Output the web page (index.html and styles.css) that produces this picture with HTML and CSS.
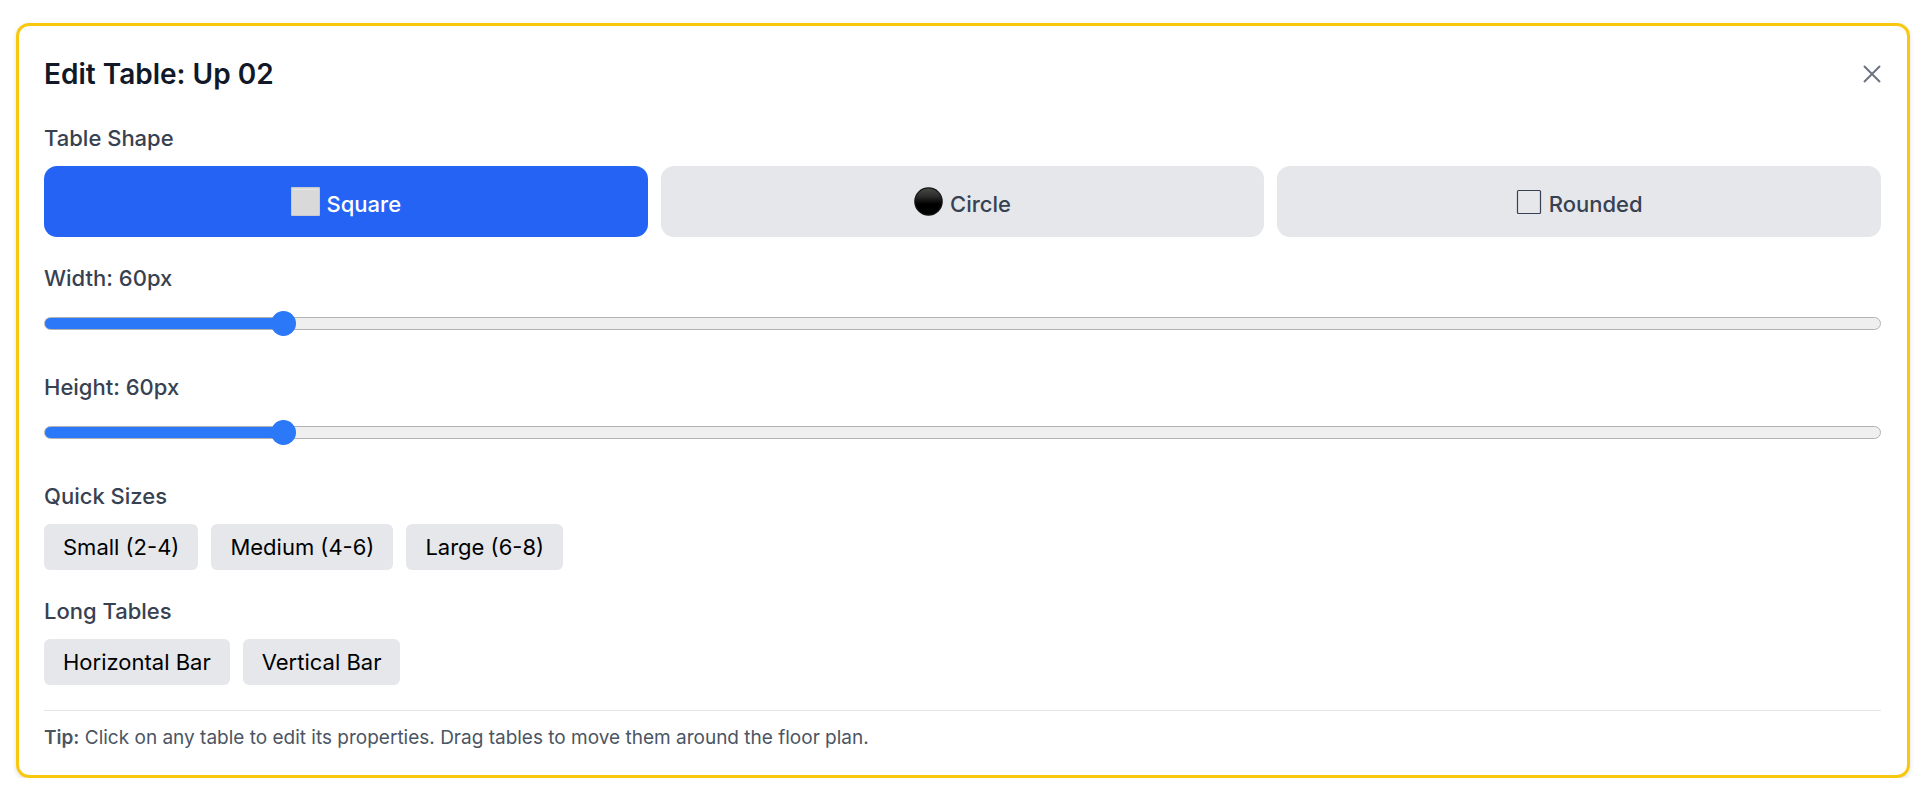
FILE: index.html
```
<!DOCTYPE html>
<html lang="en">
<head>
  <meta charset="UTF-8">
  <meta name="viewport" content="width=device-width, initial-scale=1.0">
  <title>Edit Table</title>
  <link rel="stylesheet" href="styles.css">
</head>
<body>
  <section class="editor">
    <header class="editor-header">
      <h3>Edit Table: Up 02</h3>
      <button class="close-btn" type="button" aria-label="Close">
        <svg width="18" height="18" viewBox="0 0 18 18" fill="none" stroke="currentColor" stroke-width="2"><path d="M1 1L17 17M17 1L1 17"/></svg>
      </button>
    </header>

    <div class="field">
      <span class="label" id="shapeLabel">Table Shape</span>
      <div class="shapes" role="group" aria-labelledby="shapeLabel">
        <button class="shape-btn active" type="button">
          <svg width="29" height="29" viewBox="0 0 29 29"><rect width="29" height="29" rx="1" fill="#c9cacf"/><rect x="1" y="1" width="27" height="27" fill="#d9d9d9"/><path d="M2 2.500H27" stroke="#e4e4e4"/></svg>
          <span>Square</span>
        </button>
        <button class="shape-btn" type="button">
          <svg width="29" height="29" viewBox="0 0 29 29">
            <defs><linearGradient id="shine" x1="0" y1="0" x2="0" y2="1"><stop offset="0" stop-color="#484845"/><stop offset=".3" stop-color="#2c2c2b"/><stop offset=".6" stop-color="#000"/></linearGradient></defs>
            <circle cx="14.500" cy="14.500" r="14.300" fill="#151515"/>
            <circle cx="14.500" cy="14.500" r="13" fill="url(#shine)"/>
          </svg>
          <span>Circle</span>
        </button>
        <button class="shape-btn" type="button">
          <svg width="26" height="29" viewBox="0 0 26 29" fill="none" stroke="currentColor"><rect x="1.500" y="3.500" width="23" height="23" rx="1" stroke-width="1.200"/></svg>
          <span>Rounded</span>
        </button>
      </div>
    </div>

    <div class="field">
      <label class="label" for="width">Width: <output id="widthValue">60</output>px</label>
      <input class="slider" id="width" type="range" min="40" max="200" value="60" style="--fill: 12.5%">
    </div>

    <div class="field">
      <label class="label" for="height">Height: <output id="heightValue">60</output>px</label>
      <input class="slider" id="height" type="range" min="40" max="200" value="60" style="--fill: 12.5%">
    </div>

    <div class="field">
      <span class="label" id="quickLabel">Quick Sizes</span>
      <div class="presets" role="group" aria-labelledby="quickLabel">
        <button type="button" onclick="setSize(60, 60)">Small (2-4)</button>
        <button type="button" onclick="setSize(80, 80)">Medium (4-6)</button>
        <button type="button" onclick="setSize(100, 100)">Large (6-8)</button>
      </div>
    </div>

    <div class="field">
      <span class="label" id="longLabel">Long Tables</span>
      <div class="presets" role="group" aria-labelledby="longLabel">
        <button type="button" onclick="setSize(160, 60)">Horizontal Bar</button>
        <button type="button" onclick="setSize(60, 160)">Vertical Bar</button>
      </div>
    </div>

    <p class="tip"><strong>Tip:</strong> Click on any table to edit its properties. Drag tables to move them around the floor plan.</p>
  </section>

  <script>
    const sliders = document.querySelectorAll('.slider');
    const shapeButtons = document.querySelectorAll('.shape-btn');

    function updateSlider(slider) {
      const fill = (slider.value - slider.min) / (slider.max - slider.min) * 100;
      slider.style.setProperty('--fill', `${fill}%`);
      document.getElementById(`${slider.id}Value`).textContent = slider.value;
    }

    function setSize(width, height) {
      document.getElementById('width').value = width;
      document.getElementById('height').value = height;
      sliders.forEach(updateSlider);
    }

    sliders.forEach((slider) => {
      slider.addEventListener('input', () => updateSlider(slider));
    });

    shapeButtons.forEach((button) => {
      button.addEventListener('click', () => {
        shapeButtons.forEach((b) => b.classList.remove('active'));
        button.classList.add('active');
      });
    });
  </script>
</body>
</html>
```
FILE: styles.css
```
* { margin: 0; padding: 0; box-sizing: border-box; }

body {
  font-family: Inter, "Liberation Sans", sans-serif;
  font-size: 22px;
  line-height: 32px;
  background: #fff;
  color: #000;
}

button {
  font: inherit;
  color: inherit;
  border: none;
  cursor: pointer;
}

.editor {
  margin: 23px 22px 0 16px;
  padding: 25px 26px 24px 25px;
  border: 3px solid #f8c811;
  border-radius: 13px;
  box-shadow: 0 2px 5px rgba(0, 0, 0, 0.12);
}

.editor-header {
  display: flex;
  justify-content: space-between;
  align-items: center;
  margin-bottom: 25px;
}

.editor-header h3 {
  font-size: 28px;
  line-height: 46px;
  font-weight: 600;
  color: #111827;
}

.close-btn {
  display: flex;
  background: transparent;
  color: #6b7280;
}

.field { margin-bottom: 25px; }

.label {
  display: block;
  margin-bottom: 12px;
  font-weight: 450;
  color: #374151;
}

.shapes {
  display: grid;
  grid-template-columns: repeat(3, 1fr);
  gap: 13px;
}

.shape-btn {
  display: flex;
  justify-content: center;
  align-items: center;
  gap: 7px;
  height: 71px;
  border-radius: 13px;
  background: #e5e7eb;
  color: #374151;
  font-weight: 500;
}

.shape-btn span { padding-top: 4px; }

.shape-btn.active {
  background: #2563f5;
  color: #fff;
}

.slider {
  display: block;
  width: 100%;
  height: 35px;
  margin-bottom: 30px;
  appearance: none;
  background: transparent;
  cursor: pointer;
}

.slider::-webkit-slider-runnable-track {
  height: 13px;
  border: 1px solid #b2b2b2;
  border-radius: 7px;
  background: linear-gradient(to right, #2b78f8 var(--fill), #efefef var(--fill));
}

.slider::-webkit-slider-thumb {
  appearance: none;
  width: 25px;
  height: 25px;
  margin-top: -7px;
  border-radius: 50%;
  background: #2b78f8;
}

.presets {
  display: flex;
  flex-wrap: wrap;
  gap: 13px;
}

.presets button {
  height: 46px;
  padding: 0 19px;
  border-radius: 6px;
  background: #e5e7eb;
}

.tip {
  padding-top: 14px;
  border-top: 1px solid #e5e7eb;
  font-size: 19px;
  line-height: 26px;
  color: #4b5563;
}

.tip strong { font-weight: 600; }
```
